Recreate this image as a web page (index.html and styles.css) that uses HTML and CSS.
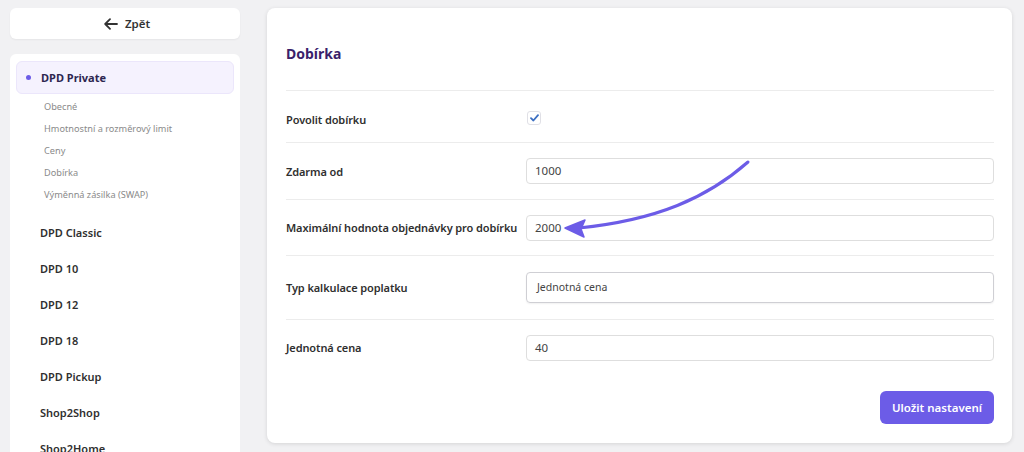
FILE: index.html
```html
<!DOCTYPE html>
<html lang="cs">
<head>
  <meta charset="UTF-8">
  <meta name="viewport" content="width=device-width, initial-scale=1.0">
  <title>DPD - Dobírka</title>
  <link rel="stylesheet" href="styles.css">
</head>
<body>
  <div class="layout">
    <!-- Left column -->
    <div class="side">
      <a class="back-btn" href="#">
        <svg width="14" height="12" viewBox="0 0 14 12" fill="none" stroke="#333" stroke-width="1.8" stroke-linecap="round" stroke-linejoin="round">
          <path d="M13 6H1.5M6 1.2L1.2 6L6 10.8"/>
        </svg>
        <span>Zpět</span>
      </a>

      <div class="side-card">
        <div class="nav-active"><span class="dot"></span>DPD Private</div>
        <ul class="sub-nav">
          <li>Obecné</li>
          <li>Hmotnostní a rozměrový limit</li>
          <li>Ceny</li>
          <li>Dobírka</li>
          <li>Výměnná zásilka (SWAP)</li>
        </ul>
        <ul class="nav">
          <li>DPD Classic</li>
          <li>DPD 10</li>
          <li>DPD 12</li>
          <li>DPD 18</li>
          <li>DPD Pickup</li>
          <li>Shop2Shop</li>
          <li>Shop2Home</li>
        </ul>
      </div>
    </div>

    <!-- Main settings card -->
    <div class="main-card">
      <h2 class="title">Dobírka</h2>

      <div class="row row-check">
        <label>Povolit dobírku</label>
        <span class="checkbox">
          <svg width="9" height="8" viewBox="0 0 9 8" fill="none" stroke="#3c6fc2" stroke-width="1.8" stroke-linecap="round" stroke-linejoin="round">
            <path d="M1 4.2L3.4 6.5L8 1.2"/>
          </svg>
        </span>
      </div>

      <div class="row row-tall">
        <label>Zdarma od</label>
        <div class="input">1000</div>
      </div>

      <div class="row">
        <label>Maximální hodnota objednávky pro dobírku</label>
        <div class="input">2000</div>
      </div>

      <div class="row row-select">
        <label>Typ kalkulace poplatku</label>
        <div class="select">Jednotná cena</div>
      </div>

      <div class="row">
        <label>Jednotná cena</label>
        <div class="input">40</div>
      </div>

      <div class="actions">
        <button class="save-btn">Uložit nastavení</button>
      </div>

      <!-- annotation arrow -->
      <svg class="arrow" width="745" height="435" viewBox="0 0 745 435" fill="none">
        <path d="M481 154 C 440 190, 390 212, 312 220" stroke="#6c5ce7" stroke-width="3" stroke-linecap="round"/>
        <path d="M298 220 L318 212 L314 221 L317 229 Z" fill="#6c5ce7" stroke="#6c5ce7" stroke-width="1.5" stroke-linejoin="round"/>
      </svg>
    </div>
  </div>
</body>
</html>
```

FILE: styles.css
```css
body {
  margin: 0;
  background: #f1f1f3;
  font-family: "Noto Sans", "Open Sans", sans-serif;
  color: #333;
  height: 452px;
  overflow: hidden;
}

.layout {
  display: flex;
  align-items: flex-start;
  gap: 27px;
  padding: 8px 10px 0;
}

/* Left column */
.side {
  width: 230px;
  flex-shrink: 0;
}

.back-btn {
  display: flex;
  align-items: center;
  justify-content: center;
  gap: 7px;
  height: 31px;
  padding-left: 4px;
  background: #fff;
  border-radius: 6px;
  box-shadow: 0 1px 2px rgba(0, 0, 0, 0.05);
  text-decoration: none;
  color: #333;
  font-size: 11.5px;
  font-weight: 600;
}

.side-card {
  margin-top: 15px;
  background: #fff;
  border-radius: 6px 6px 0 0;
  padding: 6px 6px 0;
  height: 392px;
}

.nav-active {
  display: flex;
  align-items: center;
  height: 31px;
  margin-top: 1px;
  background: #f5f2fe;
  border: 1px solid #ebe6fb;
  border-radius: 6px;
  padding-left: 9px;
  font-size: 11px;
  font-weight: 700;
  color: #2d2650;
}

.dot {
  width: 5px;
  height: 5px;
  border-radius: 50%;
  background: #6c5ce7;
  margin-right: 10px;
}

.sub-nav {
  list-style: none;
  margin: 2px 0 9px;
  padding: 0 0 0 28px;
}

.sub-nav li {
  line-height: 22px;
  font-size: 9.2px;
  color: #8a8a8a;
}

.nav {
  list-style: none;
  margin: 0;
  padding: 0 0 0 24px;
}

.nav li {
  line-height: 36px;
  font-size: 11px;
  font-weight: 600;
  color: #2f2f2f;
}

/* Main card */
.main-card {
  position: relative;
  width: 745px;
  height: 435px;
  box-sizing: border-box;
  background: #fff;
  border-radius: 8px;
  box-shadow: 0 1px 4px rgba(0, 0, 0, 0.12);
  padding: 36px 18px 0 19px;
}

.title {
  margin: 0 0 26px;
  font-size: 14px;
  line-height: 20px;
  font-weight: 700;
  color: #3a1f6b;
}

.row {
  display: grid;
  grid-template-columns: 240px 1fr;
  align-items: center;
  height: 56px;
  border-top: 1px solid #ececec;
  box-sizing: border-box;
}

.row:last-of-type {
  border-bottom: 1px solid #ececec;
  height: 57px;
}

.row-check {
  height: 52px;
  padding-top: 6px;
}

.row-tall {
  height: 57px;
}

.row-select {
  height: 64px;
}

.row label {
  font-size: 11px;
  font-weight: 600;
  letter-spacing: -0.1px;
  color: #2f2f2f;
  white-space: nowrap;
}

.checkbox {
  display: flex;
  align-items: center;
  justify-content: center;
  width: 12px;
  height: 12px;
  margin-left: 1px;
  margin-top: -4px;
  border: 1px solid #e0e0e6;
  border-radius: 3px;
  background: #fff;
}

.input {
  height: 24px;
  line-height: 24px;
  border: 1px solid #dedede;
  border-radius: 4px;
  padding-left: 8px;
  font-size: 11.5px;
  color: #444;
}

.select {
  height: 29px;
  line-height: 29px;
  border: 1px solid #cfcfd4;
  border-radius: 4px;
  padding-left: 10px;
  font-size: 10.5px;
  color: #444;
  box-shadow: 0 1px 2px rgba(0, 0, 0, 0.06);
}

.actions {
  display: flex;
  justify-content: flex-end;
  padding-top: 16px;
}

.save-btn {
  width: 114px;
  height: 33px;
  border: none;
  border-radius: 6px;
  background: #6c5ce7;
  color: #fff;
  font-family: inherit;
  font-size: 11.5px;
  font-weight: 600;
}

.arrow {
  position: absolute;
  left: 0;
  top: 0;
  pointer-events: none;
}
```
